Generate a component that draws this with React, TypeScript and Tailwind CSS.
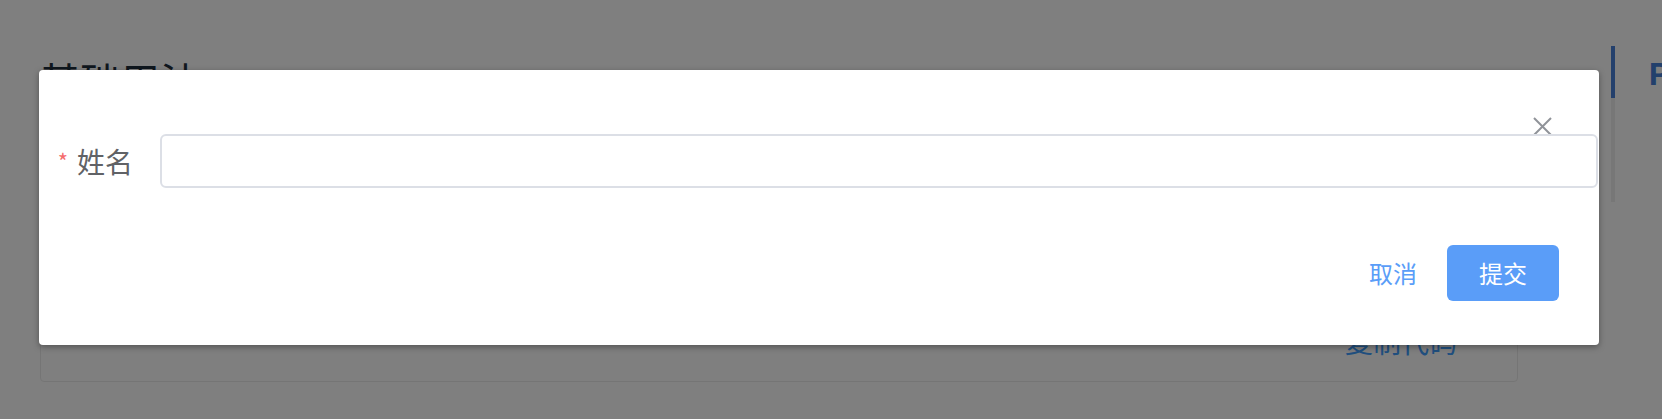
const CloseIcon = () => (
  <svg width="19" height="19" viewBox="0 0 19 19" fill="none">
    <path d="M1 1L18 18M18 1L1 18" stroke="#909399" strokeWidth="2" />
  </svg>
)

const BackgroundPage = () => {
  return (
    <div className="flex h-full w-full">
      <div className="w-[1611px] shrink-0 pl-[40px]">
        <h2 className="mt-[60px] text-[40px] leading-none text-[#1f2f3d] whitespace-nowrap">基础用法</h2>
        <div className="mt-[20px] flex h-[262px] w-[1478px] flex-col justify-end rounded-[4px] border border-[#ebebeb]">
          <div className="flex justify-end pb-[26px] pr-[60px]">
            <span className="text-[28px] leading-none text-[#409eff]">复制代码</span>
          </div>
        </div>
      </div>
      <div className="flex shrink-0 pt-[46px]">
        <div className="flex w-[4px] flex-col">
          <div className="h-[52px] bg-[#4880d8]" />
          <div className="h-[104px] bg-[#eeeeee]" />
        </div>
        <span className="mt-[12px] pl-[34px] font-['Roboto',sans-serif] text-[32px] font-bold leading-none text-[#4480d8]">
          P
        </span>
      </div>
    </div>
  )
}

const App = () => {
  return (
    <div className="relative h-[419px] w-[1662px] overflow-hidden bg-white font-['Noto_Sans_CJK_SC',sans-serif]">
      <BackgroundPage />
      <div className="absolute inset-0 bg-black/50" />
      <div className="absolute inset-0 pl-[39px] pt-[70px]">
        <div className="w-[1560px] rounded-[4px] bg-white shadow-[0_2px_6px_rgba(0,0,0,0.35)]">
          <div className="relative h-[64px]">
            <button className="absolute right-[47px] top-[47px] h-[19px] w-[19px]">
              <CloseIcon />
            </button>
          </div>
          <div className="relative z-10 flex h-[54px] items-center pr-[1px]">
            <label className="flex w-[121px] shrink-0 items-center justify-end pr-[27px] text-[28px] leading-none text-[#606266]">
              <span className="mr-[9px] self-start pt-[2px] text-[22px] text-[#f56c6c]">*</span>
              姓名
            </label>
            <input
              type="text"
              className="h-[54px] flex-1 rounded-[6px] border-2 border-[#dcdfe6] bg-white px-[20px] text-[24px] outline-none"
            />
          </div>
          <div className="flex items-center justify-end gap-[30px] pb-[44px] pr-[40px] pt-[57px]">
            <button className="text-[24px] leading-none text-[#5a9df8]">取消</button>
            <button className="flex h-[56px] w-[112px] items-center justify-center rounded-[6px] bg-[#5a9df8] text-[24px] leading-none text-white">
              提交
            </button>
          </div>
        </div>
      </div>
    </div>
  )
}

export default App
